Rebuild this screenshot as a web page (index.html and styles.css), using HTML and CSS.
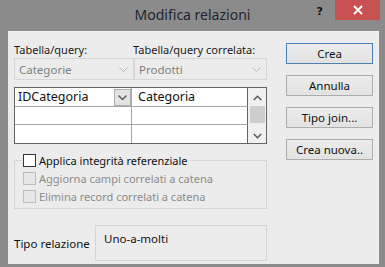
FILE: index.html
```html
<!DOCTYPE html>
<html lang="it">
<head>
<meta charset="utf-8">
<title>Modifica relazioni</title>
<link rel="stylesheet" href="styles.css">
</head>
<body>
<div class="window">
  <div class="titlebar">
    <div></div>
    <div class="title">Modifica relazioni</div>
    <div class="controls">
      <span class="help">?</span>
      <span class="close"><svg width="10" height="10" viewBox="0 0 10 10"><path d="M1 1 L9 9 M9 1 L1 9" stroke="#fff" stroke-width="2"/></svg></span>
    </div>
  </div>
  <div class="client">
    <div class="left">
      <div class="labels">
        <span class="lbl lbl1">Tabella/query:</span>
        <span class="lbl">Tabella/query correlata:</span>
      </div>
      <div class="combos">
        <div class="combo c1"><span>Categorie</span><svg width="9" height="5" viewBox="0 0 9 5"><path d="M0.5 0.5 L4.5 4.5 L8.5 0.5" fill="none" stroke="#b4b4b4"/></svg></div>
        <div class="combo c2"><span>Prodotti</span><svg width="9" height="5" viewBox="0 0 9 5"><path d="M0.5 0.5 L4.5 4.5 L8.5 0.5" fill="none" stroke="#b4b4b4"/></svg></div>
      </div>
      <div class="grid">
        <div class="cells">
          <div class="cell first">IDCategoria<span class="dd"><svg width="9" height="5" viewBox="0 0 9 5"><path d="M0.5 0.5 L4.5 4.5 L8.5 0.5" fill="none" stroke="#555" stroke-width="1.4"/></svg></span></div>
          <div class="cell">Categoria</div>
          <div class="cell"></div>
          <div class="cell"></div>
          <div class="cell"></div>
          <div class="cell"></div>
        </div>
        <div class="scroll">
          <svg width="9" height="6" viewBox="0 0 9 6"><path d="M0.8 5 L4.5 1.3 L8.2 5" fill="none" stroke="#5a5a5a" stroke-width="1.6"/></svg>
          <div class="thumb"></div>
          <svg width="9" height="6" viewBox="0 0 9 6"><path d="M0.8 1 L4.5 4.7 L8.2 1" fill="none" stroke="#5a5a5a" stroke-width="1.6"/></svg>
        </div>
      </div>
      <fieldset class="group">
        <legend><span class="cb"></span>Applica integrità referenziale</legend>
        <div class="opt"><span class="cb dis"></span>Aggiorna campi correlati a catena</div>
        <div class="opt"><span class="cb dis"></span>Elimina record correlati a catena</div>
      </fieldset>
      <div class="tipo">
        <span class="tlabel">Tipo relazione</span>
        <div class="tbox">Uno-a-molti</div>
      </div>
    </div>
    <div class="right">
      <div class="btn default">Crea</div>
      <div class="btn">Annulla</div>
      <div class="btn">Tipo join...</div>
      <div class="btn">Crea nuova..</div>
    </div>
  </div>
</div>
</body>
</html>
```

FILE: styles.css
```css
* { box-sizing: border-box; }
html, body { margin: 0; padding: 0; }
body {
  width: 385px;
  height: 267px;
  overflow: hidden;
  background: #8b8b8b;
  font-family: "Noto Sans", "Open Sans", sans-serif;
  font-size: 11px;
  color: #1a1a1a;
}
.window {
  width: 385px;
  height: 267px;
  display: flex;
  flex-direction: column;
  background: #8b8b8b;
}
.titlebar {
  height: 31px;
  flex: none;
  display: grid;
  grid-template-columns: 1fr auto 1fr;
  align-items: start;
}
.title {
  font-size: 14px;
  line-height: 20px;
  padding-top: 5px;
  color: #1d2530;
}
.controls {
  display: flex;
  justify-content: flex-end;
  align-items: flex-start;
  padding-right: 5px;
}
.help {
  font-family: "DejaVu Sans", sans-serif;
  font-weight: bold;
  font-size: 11px;
  line-height: 12px;
  margin-top: 6px;
  margin-right: 12px;
  color: #111;
}
.close {
  width: 45px;
  height: 20px;
  background: #c75050;
  display: flex;
  align-items: center;
  justify-content: center;
}
.client {
  flex: 1;
  margin: 0 6px 3px 8px;
  background: #ececec;
  border-top: 1px solid #f2f2f2;
  border-right: 1px solid #f4f4f4;
  display: flex;
  padding: 0 5px 0 6px;
}
.left {
  width: 254px;
  display: flex;
  flex-direction: column;
}
.labels {
  display: flex;
  height: 16px;
  margin-top: 10px;
  line-height: 16px;
}
.lbl1 { width: 119px; }
.combos {
  display: flex;
  height: 22px;
}
.combo {
  height: 22px;
  border: 1px solid #d6d6d6;
  display: flex;
  align-items: center;
  justify-content: space-between;
  color: #7f7f7f;
  padding: 0 5px 0 4px;
  font-size: 11.5px;
}
.combo.c1 { width: 120px; }
.combo.c2 { flex: 1; }
.grid {
  margin-top: 7px;
  height: 57px;
  border: 1px solid #646464;
  display: flex;
  background: #fff;
}
.cells {
  flex: 1;
  display: grid;
  grid-template-columns: 117px 1fr;
  grid-template-rows: 19px 18px 18px;
}
.cell {
  border-right: 1px solid #a6a6a6;
  border-bottom: 1px solid #a6a6a6;
  font-size: 12.5px;
  line-height: 18px;
  padding-left: 3px;
  color: #111;
  display: flex;
  justify-content: space-between;
  align-items: center;
}
.cell:nth-child(2n) { border-right: 1px solid #646464; padding-left: 6px; }
.cell:nth-child(n+5) { border-bottom: none; }
.dd {
  width: 17px;
  height: 17px;
  border: 1px solid #adadad;
  background: #e3e3e3;
  display: flex;
  align-items: center;
  justify-content: center;
}
.scroll {
  width: 18px;
  background: #f0f0f0;
  display: flex;
  flex-direction: column;
  align-items: center;
  padding-top: 7px;
}
.thumb {
  width: 15px;
  height: 17px;
  background: #cdcdcd;
  margin: 5px 0 10px;
}
.group {
  margin: 9px 0 0;
  padding: 1px 0 0 7px;
  height: 56px;
  border: 1px solid #d5d5d5;
  min-width: 0;
}
legend {
  padding: 0 2px 0 1px;
  display: flex;
  align-items: center;
  height: 15px;
  font-size: 11px;
  color: #111;
}
.cb {
  width: 13px;
  height: 13px;
  border: 1px solid #333;
  background: #fff;
  margin-right: 3px;
  flex: none;
}
.cb.dis {
  border-color: #bcbcbc;
  background: #e6e6e6;
}
.opt {
  display: flex;
  align-items: center;
  height: 18px;
  font-size: 11px;
  color: #8b8b8b;
  padding-left: 1px;
}
.tipo {
  margin-top: 16px;
  display: flex;
  align-items: center;
}
.tlabel {
  width: 81px;
  font-size: 11.5px;
  color: #111;
}
.tbox {
  flex: 1;
  height: 36px;
  border: 1px solid #d5d5d5;
  padding: 5px 0 0 8px;
  font-size: 11.5px;
  color: #111;
}
.right {
  margin-left: 19px;
  padding-top: 11px;
  display: flex;
  flex-direction: column;
  gap: 11px;
}
.btn {
  width: 87px;
  height: 21px;
  border: 1px solid #acacac;
  background: linear-gradient(#ececec, #e2e2e2);
  display: flex;
  align-items: center;
  justify-content: center;
  font-size: 11.5px;
  color: #111;
}
.btn.default { border-color: #4d82b8; }
```
